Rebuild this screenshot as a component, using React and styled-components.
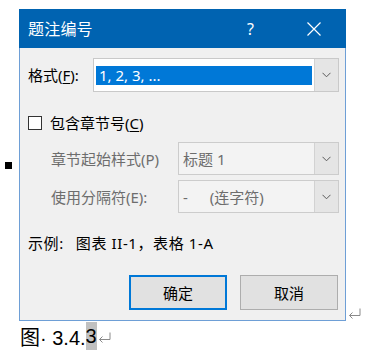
import * as React from "react";
import styled, { createGlobalStyle } from "styled-components";

const GlobalStyle = createGlobalStyle`
  html, body {
    margin: 0;
    padding: 0;
    background: #ffffff;
  }
  body {
    font-family: "Noto Sans", "Noto Sans CJK SC", sans-serif;
  }
`;

function Chevron() {
  return (
    <svg width="9" height="6" viewBox="0 0 9 6">
      <path d="M0.5 0.8 L4.5 4.8 L8.5 0.8" fill="none" stroke="#5a5a5a" strokeWidth="1" />
    </svg>
  );
}

function CloseIcon() {
  return (
    <svg width="14" height="14" viewBox="0 0 14 14">
      <path d="M0.5 0.5 L13.5 13.5 M13.5 0.5 L0.5 13.5" stroke="#ffffff" strokeWidth="1.2" />
    </svg>
  );
}

function ReturnMark({ size = 13 }) {
  return (
    <svg width={size} height={size - 2} viewBox="0 0 13 11">
      <path
        d="M12 0.5 V7.5 H1.5 M4.5 4.5 L1.5 7.5 L4.5 10.5"
        fill="none"
        stroke="#8a8a8a"
        strokeWidth="1"
      />
    </svg>
  );
}

function Combo({ value, width, disabled, selected }) {
  return (
    <ComboBox $width={width} $disabled={disabled}>
      <ComboField $selected={selected} $disabled={disabled}>
        {value}
      </ComboField>
      <ComboButton>
        <Chevron />
      </ComboButton>
    </ComboBox>
  );
}

export default function App() {
  return (
    <Page>
      <GlobalStyle />
      <TopRow>
        <Gutter>
          <Bullet />
        </Gutter>
        <Dialog>
          <TitleBar>
            <Title>题注编号</Title>
            <HelpButton>?</HelpButton>
            <CloseButton>
              <CloseIcon />
            </CloseButton>
          </TitleBar>

          <Body>
            <FormatRow>
              <Label>
                格式(<u>F</u>):
              </Label>
              <Combo value="1, 2, 3, ..." width={246} selected />
            </FormatRow>

            <CheckRow>
              <CheckBox />
              <Label>
                包含章节号(<u>C</u>)
              </Label>
            </CheckRow>

            <SubRows>
              <SubRow>
                <Label $muted $width={127}>
                  章节起始样式(P)
                </Label>
                <Combo value="标题 1" width={161} disabled />
              </SubRow>
              <SubRow>
                <Label $muted $width={127}>
                  使用分隔符(E):
                </Label>
                <Combo
                  value={
                    <>
                      -<Gap $w={22} />(连字符)
                    </>
                  }
                  width={161}
                  disabled
                />
              </SubRow>
            </SubRows>

            <Example>
              示例:<Gap $w={12} />图表 II-1，表格 1-A
            </Example>

            <ButtonRow>
              <Button $primary>确定</Button>
              <Button>取消</Button>
            </ButtonRow>
          </Body>
        </Dialog>
        <TrailMark>
          <ReturnMark />
        </TrailMark>
      </TopRow>

      <CaptionLine>
        图·&nbsp;3.4.<Highlight>3</Highlight>
        <CaptionMark>
          <ReturnMark />
        </CaptionMark>
      </CaptionLine>
    </Page>
  );
}

/* =============================== */
// styles

const Page = styled.div`
  display: flex;
  flex-direction: column;
  padding-top: 9px;
  width: 389px;
  height: 360px;
  box-sizing: border-box;
  overflow: hidden;
`;

const TopRow = styled.div`
  display: flex;
  align-items: stretch;
`;

const Gutter = styled.div`
  width: 19px;
  padding-top: 153px;
  box-sizing: border-box;
`;

const Bullet = styled.div`
  width: 7px;
  height: 7px;
  margin-left: 5px;
  background: #000000;
`;

const Dialog = styled.div`
  width: 327px;
  display: flex;
  flex-direction: column;
  background: #f0f0f0;
  border: 1px solid #6e9fd6;
  border-top: none;
  box-sizing: border-box;
`;

const TitleBar = styled.div`
  height: 39px;
  margin: 0 -1px;
  display: flex;
  align-items: center;
  background: #0063b1;
  color: #ffffff;
  padding-left: 9px;
`;

const Title = styled.div`
  font-size: 16px;
  line-height: 20px;
  letter-spacing: 0.2px;
  flex: 1;
`;

const HelpButton = styled.div`
  font-family: "Noto Sans", sans-serif;
  font-size: 16px;
  line-height: 20px;
  margin-right: 53px;
`;

const CloseButton = styled.div`
  display: flex;
  margin-right: 25px;
`;

const Body = styled.div`
  display: flex;
  flex-direction: column;
  padding: 10px 6px 10px 8px;
`;

const FormatRow = styled.div`
  display: flex;
  align-items: center;
  height: 34px;
`;

const Label = styled.div`
  width: ${(p) => (p.$width ? `${p.$width}px` : "auto")};
  min-width: ${(p) => (p.$width ? `${p.$width}px` : "65px")};
  font-size: 15px;
  line-height: 20px;
  color: ${(p) => (p.$muted ? "#6d6d6d" : "#000000")};
  white-space: nowrap;

  u {
    text-decoration-thickness: 1px;
    text-underline-offset: 2px;
  }
`;

const Gap = styled.span`
  display: inline-block;
  width: ${(p) => p.$w}px;
`;

const ComboBox = styled.div`
  width: ${(p) => p.$width}px;
  height: 100%;
  display: flex;
  align-items: stretch;
  box-sizing: border-box;
  border: 1px solid ${(p) => (p.$disabled ? "#cccccc" : "#c9c9c9")};
  background: ${(p) => (p.$disabled ? "#f3f3f3" : "#ffffff")};
  padding: ${(p) => (p.$disabled ? "0" : "0 0 0 2px")};
`;

const ComboField = styled.div`
  flex: 1;
  display: flex;
  align-items: center;
  font-size: 15px;
  white-space: nowrap;
  color: ${(p) => (p.$disabled ? "#6d6d6d" : "#ffffff")};
  padding-left: ${(p) => (p.$disabled ? "4px" : "3px")};

  ${(p) =>
    p.$selected &&
    `
    background: #0078d7;
    margin: 7px 2px 6px 0;
    line-height: 19px;
  `}
`;

const ComboButton = styled.div`
  width: 23px;
  display: flex;
  align-items: center;
  justify-content: center;
  background: #e5e5e5;
  border-left: 1px solid #d2d2d2;
`;

const CheckRow = styled.div`
  display: flex;
  align-items: center;
  gap: 8px;
  height: 20px;
  margin-top: 21px;
`;

const CheckBox = styled.div`
  width: 14px;
  height: 14px;
  box-sizing: border-box;
  border: 1px solid #333333;
  background: #ffffff;
`;

const SubRows = styled.div`
  display: flex;
  flex-direction: column;
  gap: 5px;
  margin-top: 9px;
  padding-left: 23px;
`;

const SubRow = styled.div`
  display: flex;
  align-items: center;
  height: 33px;
`;

const Example = styled.div`
  margin-top: 20px;
  font-size: 15px;
  line-height: 20px;
  letter-spacing: 0.6px;
  color: #000000;
  white-space: nowrap;
`;

const ButtonRow = styled.div`
  display: flex;
  justify-content: flex-end;
  gap: 13px;
  margin-top: 22px;
  padding-right: 1px;
`;

const Button = styled.div`
  width: 98px;
  height: 35px;
  box-sizing: border-box;
  display: flex;
  align-items: center;
  justify-content: center;
  font-size: 15px;
  color: #000000;
  background: #e1e1e1;
  border: ${(p) => (p.$primary ? "2px solid #0078d7" : "1px solid #adadad")};
`;

const TrailMark = styled.div`
  align-self: flex-end;
  margin-left: 2px;
  margin-bottom: 2px;
  display: flex;
`;

const CaptionLine = styled.div`
  display: flex;
  align-items: center;
  padding-left: 20px;
  margin-top: 1px;
  height: 28px;
  font-family: "Liberation Sans", "Noto Sans CJK SC", sans-serif;
  font-size: 20px;
  color: #000000;
  white-space: nowrap;
`;

const Highlight = styled.span`
  background: #c0c0c0;
  line-height: 28px;
  display: inline-block;
`;

const CaptionMark = styled.span`
  display: inline-flex;
  margin-left: 1px;
  margin-top: 2px;
`;
